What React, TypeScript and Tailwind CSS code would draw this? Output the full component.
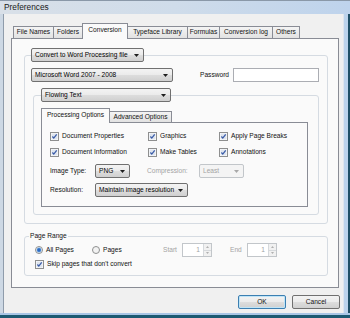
import React from 'react';

// Vista-style gray button face
const FACE = 'bg-[linear-gradient(to_bottom,#f3f3f3_0%,#ebebeb_50%,#dddddd_51%,#d0d0d0_100%)]';

const Caret: React.FC<{ dim?: boolean }> = ({ dim }) => (
  <svg width="5" height="3" viewBox="0 0 5 3" className="shrink-0">
    <path d="M0 0H5L2.5 3Z" fill={dim ? '#a8a8a8' : '#1e1e1e'} />
  </svg>
);

const Combo: React.FC<{ text: string; className: string; dim?: boolean }> = ({ text, className, dim }) => (
  <div
    className={`flex h-[14px] shrink-0 items-center justify-between rounded-[2px] border pl-[3px] pr-[4px] ${
      dim ? 'border-[#c2c6ca] bg-[#f4f4f4] text-[#a3a3a3]' : `border-[#707070] text-black ${FACE}`
    } ${className}`}
  >
    <span className="whitespace-nowrap">{text}</span>
    <Caret dim={dim} />
  </div>
);

const Check: React.FC<{ label: string }> = ({ label }) => (
  <div className="flex items-center gap-[3px] whitespace-nowrap">
    <svg width="9" height="9" viewBox="0 0 9 9" className="shrink-0">
      <rect x="0.5" y="0.5" width="8" height="8" fill="#ffffff" stroke="#8e8f8f" />
      <rect x="1.5" y="1.5" width="6" height="6" fill="#dfe5ee" />
      <path d="M2.4 4.5L3.8 6.1L6.7 2.4" fill="none" stroke="#3a5ca8" strokeWidth="1.3" />
    </svg>
    <span>{label}</span>
  </div>
);

const Radio: React.FC<{ label: string; on?: boolean; className: string }> = ({ label, on, className }) => (
  <div className={`flex items-center gap-[3px] whitespace-nowrap ${className}`}>
    <svg width="8" height="8" viewBox="0 0 8 8" className="shrink-0">
      <circle cx="4" cy="4" r="3.5" fill="#f2f2f2" stroke="#8e8f8f" />
      {on && <circle cx="4" cy="4" r="2.2" fill="#2c6ac2" stroke="#8fc0ee" strokeWidth="0.6" />}
    </svg>
    <span>{label}</span>
  </div>
);

const Spin: React.FC = () => (
  <div className="flex h-[14px] w-[30px] shrink-0 items-stretch border border-[#c2c6ca] bg-white text-[#a3a3a3]">
    <span className="flex flex-1 items-center justify-end pr-[3px]">1</span>
    <div className="flex w-[8px] flex-col border-l border-[#d6d9dc] bg-[#f1f1f1]">
      <div className="flex flex-1 items-center justify-center border-b border-[#d6d9dc]">
        <svg width="3" height="2" viewBox="0 0 3 2"><path d="M0 2H3L1.5 0Z" fill="#b0b0b0" /></svg>
      </div>
      <div className="flex flex-1 items-center justify-center">
        <svg width="3" height="2" viewBox="0 0 3 2"><path d="M0 0H3L1.5 2Z" fill="#b0b0b0" /></svg>
      </div>
    </div>
  </div>
);

const TAB_OFF = 'bg-[linear-gradient(to_bottom,#f4f4f4,#e2e2e2)]';

const App: React.FC = () => {
  return (
    <div className="h-[318px] w-[350px] overflow-hidden bg-[#c0d5ec] text-[6.6px] leading-none text-[#111] font-['Liberation_Sans',Arial,sans-serif]">
      {/* Title bar */}
      <div className="flex h-[14px] items-center border-t border-[#8a98a8] bg-[linear-gradient(to_right,#d9e0e8_0%,#cfdcea_50%,#bed3ec_100%)] pl-[4px] text-[8.3px] text-[#1a1a1a]">
        Preferences
      </div>

      <div className="flex">
        <div className="h-[299px] w-[4px] border-r border-[#8f9cab] bg-[#cdd8e4]" />

        {/* Client area */}
        <div className="h-[299px] w-[339px] bg-[#f0f0f0] pt-[9px]">
          {/* Top tabs */}
          <div className="ml-[9px] flex h-[15px] items-end">
            <div className={`flex h-[12px] w-[41px] items-center justify-center border border-b-0 border-[#898c95] ${TAB_OFF}`}>File Names</div>
            <div className={`-ml-px flex h-[12px] w-[30px] items-center justify-center border border-b-0 border-[#898c95] ${TAB_OFF}`}>Folders</div>
            <div className="relative z-10 -mb-px -ml-px flex h-[16px] w-[46px] items-center justify-center border border-b-0 border-[#898c95] bg-[#fafafa] pb-[2px]">Conversion</div>
            <div className={`-ml-px flex h-[12px] w-[61px] items-center justify-center border border-b-0 border-[#898c95] ${TAB_OFF}`}>Typeface Library</div>
            <div className={`-ml-px flex h-[12px] w-[33px] items-center justify-center border border-b-0 border-[#898c95] ${TAB_OFF}`}>Formulas</div>
            <div className={`-ml-px flex h-[12px] w-[54px] items-center justify-center border border-b-0 border-[#898c95] ${TAB_OFF}`}>Conversion log</div>
            <div className={`-ml-px flex h-[12px] w-[28px] items-center justify-center border border-b-0 border-[#898c95] ${TAB_OFF}`}>Others</div>
          </div>

          {/* Tab page */}
          <div className="ml-[7px] h-[250px] w-[328px] border border-[#898c95] bg-[#fafafa] pt-[16px]">
            {/* Output group */}
            <div className="ml-[12px] w-[304px] rounded-[3px] border border-[#d5dbe2] pb-[8px]">
              <Combo text="Convert to Word Processing file" className="-mt-[8px] ml-[6px] w-[113px]" />

              <div className="ml-[6px] mt-[6px] flex h-[14px] items-center">
                <Combo text="Microsoft Word 2007 - 2008" className="w-[142px]" />
                <span className="w-[56px] text-right">Password</span>
                <div className="ml-[4px] h-[14px] w-[86px] border border-[#abadb3] bg-white" />
              </div>

              {/* Flowing text group */}
              <div className="ml-[8px] mt-[13px] w-[286px] rounded-[3px] border border-[#d5dbe2] pb-[7px]">
                <Combo text="Flowing Text" className="-mt-[8px] ml-[7px] w-[130px]" />

                <div className="ml-[7px] mt-[6px] flex h-[14px] items-end">
                  <div className="relative z-10 -mb-px flex h-[15px] w-[69px] items-center justify-center border border-b-0 border-[#898c95] bg-[#fafafa] pb-[1px]">
                    Processing Options
                  </div>
                  <div className={`-ml-px flex h-[11px] w-[63px] items-center justify-center border border-b-0 border-[#898c95] ${TAB_OFF}`}>
                    Advanced Options
                  </div>
                </div>

                <div className="ml-[7px] h-[85px] w-[267px] border border-[#898c95] bg-[#fafafa] pl-[8px] pt-[8px]">
                  <div className="grid h-[10px] grid-cols-[98px_71px_1fr] items-center">
                    <Check label="Document Properties" />
                    <Check label="Graphics" />
                    <Check label="Apply Page Breaks" />
                  </div>
                  <div className="mt-[6px] grid h-[10px] grid-cols-[98px_71px_1fr] items-center">
                    <Check label="Document Information" />
                    <Check label="Make Tables" />
                    <Check label="Annotations" />
                  </div>
                  <div className="mt-[7px] flex h-[14px] items-center">
                    <span className="w-[45px]">Image Type:</span>
                    <Combo text="PNG" className="w-[35px]" />
                    <span className="ml-[17px] w-[52px] text-[#a3a3a3]">Compression:</span>
                    <Combo text="Least" dim className="w-[45px]" />
                  </div>
                  <div className="mt-[5px] flex h-[14px] items-center">
                    <span className="w-[45px]">Resolution:</span>
                    <Combo text="Maintain image resolution" className="w-[93px]" />
                  </div>
                </div>
              </div>
            </div>

            {/* Page range group */}
            <div className="ml-[12px] mt-[12px] w-[304px] rounded-[3px] border border-[#d5dbe2] pb-[6px]">
              <div className="-mt-[6px] ml-[4px] h-[9px] w-fit bg-[#fafafa] px-[1px] leading-[9px]">Page Range</div>
              <div className="ml-[10px] mt-[3px] flex h-[14px] items-center">
                <Radio label="All Pages" on className="w-[57px]" />
                <Radio label="Pages" className="w-[71px]" />
                <span className="w-[19px] text-[#a3a3a3]">Start</span>
                <Spin />
                <span className="ml-[18px] w-[17px] text-[#a3a3a3]">End</span>
                <Spin />
              </div>
              <div className="ml-[10px] mt-[2px] flex h-[10px] items-center">
                <Check label="Skip pages that don't convert" />
              </div>
            </div>
          </div>

          {/* Dialog buttons */}
          <div className="ml-[234px] mt-[7px] flex gap-[6px]">
            <button className={`flex h-[14px] w-[48px] items-center justify-center rounded-[2px] border border-[#3c7fb1] shadow-[inset_0_0_0_1px_#bfe4f7] ${FACE}`}>
              OK
            </button>
            <button className={`flex h-[14px] w-[48px] items-center justify-center rounded-[2px] border border-[#707070] ${FACE}`}>
              Cancel
            </button>
          </div>
        </div>

        <div className="h-[299px] w-[7px] border-l border-[#dfe6ee] border-r-2 border-r-[#1f4f66] bg-[#bcd3ec]" />
      </div>

      {/* Bottom frame */}
      <div className="h-[5px] border-t-2 border-[#a9c6e6] bg-[#1c5a72]" />
    </div>
  );
};

export default App;
